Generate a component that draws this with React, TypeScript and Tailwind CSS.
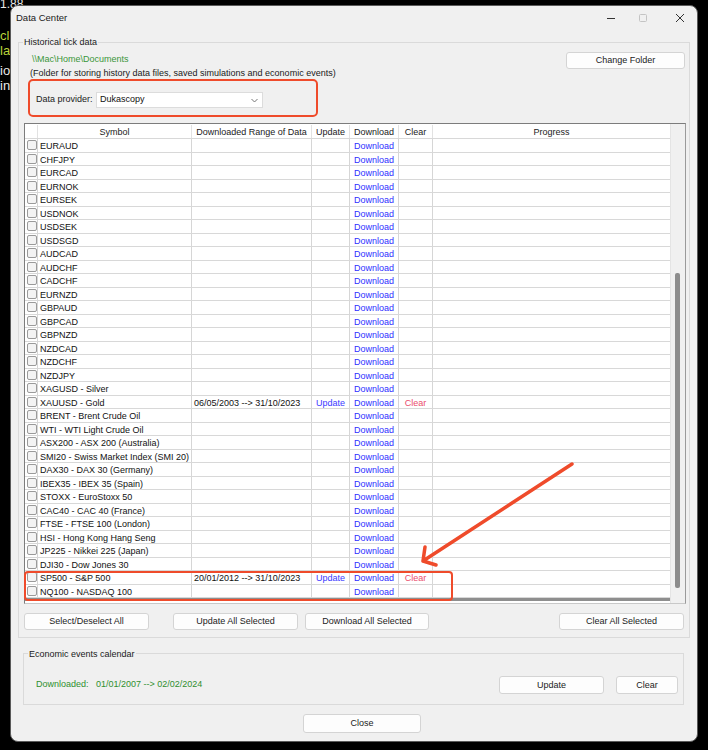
type Row = { symbol: string; range?: string };

const ROWS: Row[] = [
  { symbol: "EURAUD" },
  { symbol: "CHFJPY" },
  { symbol: "EURCAD" },
  { symbol: "EURNOK" },
  { symbol: "EURSEK" },
  { symbol: "USDNOK" },
  { symbol: "USDSEK" },
  { symbol: "USDSGD" },
  { symbol: "AUDCAD" },
  { symbol: "AUDCHF" },
  { symbol: "CADCHF" },
  { symbol: "EURNZD" },
  { symbol: "GBPAUD" },
  { symbol: "GBPCAD" },
  { symbol: "GBPNZD" },
  { symbol: "NZDCAD" },
  { symbol: "NZDCHF" },
  { symbol: "NZDJPY" },
  { symbol: "XAGUSD - Silver" },
  { symbol: "XAUUSD - Gold", range: "06/05/2003 --> 31/10/2023" },
  { symbol: "BRENT - Brent Crude Oil" },
  { symbol: "WTI - WTI Light Crude Oil" },
  { symbol: "ASX200 - ASX 200 (Australia)" },
  { symbol: "SMI20 - Swiss Market Index (SMI 20)" },
  { symbol: "DAX30 - DAX 30 (Germany)" },
  { symbol: "IBEX35 - IBEX 35 (Spain)" },
  { symbol: "STOXX - EuroStoxx 50" },
  { symbol: "CAC40 - CAC 40 (France)" },
  { symbol: "FTSE - FTSE 100 (London)" },
  { symbol: "HSI - Hong Kong Hang Seng" },
  { symbol: "JP225 - Nikkei 225 (Japan)" },
  { symbol: "DJI30 - Dow Jones 30" },
  { symbol: "SP500 - S&P 500", range: "20/01/2012 --> 31/10/2023" },
  { symbol: "NQ100 - NASDAQ 100" },
];

function Btn({ label, className }: { label: string; className: string }) {
  return (
    <button
      type="button"
      className={`block shrink-0 rounded-[3px] border border-[#d4d4d4] bg-[#fdfdfd] text-[9px] leading-none text-[#1b1b1b] ${className}`}
    >
      {label}
    </button>
  );
}

function Checkbox() {
  return (
    <div className="w-[13px] shrink-0 border-r border-[#d6d6d6] flex items-center justify-center pl-[1px]">
      <div className="w-[10px] h-[10px] rounded-[2px] border border-[#9a9a9a] bg-[#f3f3f3]" />
    </div>
  );
}

function TableRow({ row }: { row: Row }) {
  const done = !!row.range;
  return (
    <div className="flex h-[13.5px] border-b border-[#d8d8d8] leading-[13px] text-[9px] text-[#111]">
      <Checkbox />
      <div className="w-[154px] shrink-0 border-r border-[#d6d6d6] pl-[2px] pt-px whitespace-nowrap overflow-hidden">
        {row.symbol}
      </div>
      <div className="w-[120px] shrink-0 border-r border-[#d6d6d6] pl-[2px] pt-px whitespace-nowrap">
        {row.range ?? ""}
      </div>
      <div className="w-[38px] shrink-0 border-r border-[#d6d6d6] pt-px text-center text-[#3b3bff]">
        {done ? "Update" : ""}
      </div>
      <div className="w-[49px] shrink-0 border-r border-[#d6d6d6] pt-px text-center text-[#2f2fff]">
        Download
      </div>
      <div className="w-[34px] shrink-0 border-r border-[#d6d6d6] pt-px text-center text-[#ea4c6c]">
        {done ? "Clear" : ""}
      </div>
      <div className="w-[237px] shrink-0" />
    </div>
  );
}

function TitleControls() {
  return (
    <div className="flex items-center h-full">
      <svg width="10" height="10" viewBox="0 0 10 10" className="mr-[22px]">
        <line x1="1" y1="5.5" x2="9" y2="5.5" stroke="#333" strokeWidth="1" />
      </svg>
      <svg width="10" height="10" viewBox="0 0 10 10" className="mr-[27px]">
        <rect x="1.5" y="1.5" width="7" height="7" rx="1" fill="none" stroke="#c4c4c4" strokeWidth="1" />
      </svg>
      <svg width="10" height="10" viewBox="0 0 10 10" className="mr-[12px]">
        <path d="M1 1 L9 9 M9 1 L1 9" stroke="#333" strokeWidth="1" />
      </svg>
    </div>
  );
}

export default function App() {
  return (
    <div className="relative w-[708px] h-[750px] overflow-hidden bg-black pt-[5px] pl-[10px] font-['Liberation_Sans',Arial,sans-serif]">
      {/* desktop text peeking out behind the window */}
      <div className="absolute left-0 top-[-2px] text-[12px] leading-[12px] text-[#e8e8e8]">1.88</div>
      <div className="absolute left-0 top-[28px] text-[13px] leading-[15px] text-[#b8d43a]">
        <div>cl</div>
        <div>la</div>
      </div>
      <div className="absolute left-0 top-[63px] text-[13px] leading-[15px] text-[#e8e8e8]">
        <div>io</div>
        <div>in</div>
      </div>

      <div className="relative z-10 w-[688px] h-[737px] rounded-[8px] bg-[#f0f0f0] border border-[#5a5a5a]">
        <div className="flex items-center justify-between h-[24px] pl-[5px] text-[9.5px] text-[#1a1a1a]">
          <span>Data Center</span>
          <TitleControls />
        </div>

        <div className="relative mt-[12px] ml-[7px] w-[672px] h-[596px] border border-[#dadada] pt-[9px] pl-[5px] pr-[3px]">
          <span className="absolute left-[4px] top-[-7px] px-[1px] bg-[#f0f0f0] text-[9px] leading-[12px] text-[#1a1a1a]">
            Historical tick data
          </span>

          <div className="flex justify-between items-start">
            <div className="text-[9px] leading-[12px] pt-px">
              <div className="ml-[8px] text-[#3a963a]">{"\\\\Mac\\Home\\Documents"}</div>
              <div className="ml-[6px] mt-[2px] text-[#1a1a1a]">
                (Folder for storing history data files, saved simulations and economic events)
              </div>
            </div>
            <Btn label="Change Folder" className="w-[119px] h-[17px] mr-[1px]" />
          </div>

          <div className="ml-[4px] w-[290px] h-[38px] rounded-[5px] border-2 border-[#ef4b2b] pt-[11px] pl-[6px] flex items-start">
            <div className="w-[60px] h-[16px] flex items-center text-[9px] text-[#1a1a1a]">Data provider:</div>
            <div className="w-[167px] h-[16px] bg-white border border-[#dcdcdc] flex items-center justify-between pl-[3px] pr-[4px] text-[9px] text-[#111]">
              <span>Dukascopy</span>
              <svg width="7" height="5" viewBox="0 0 7 5">
                <path d="M0.5 1 L3.5 4 L6.5 1" fill="none" stroke="#777" strokeWidth="1" />
              </svg>
            </div>
          </div>

          <div className="mt-[6px] w-[662px] h-[481px] border border-t-[#7c7c7c] border-l-[#7c7c7c] border-r-[#9a9a9a] border-b-[#c8c8c8] bg-white flex">
            <div className="w-[645px] flex flex-col">
              <div className="flex h-[15px] border-b border-[#d8d8d8] pt-px leading-[14px] text-[9px] text-[#222] text-center">
                <div className="w-[13px] border-r border-[#e2e2e2]" />
                <div className="w-[154px] border-r border-[#e2e2e2]">Symbol</div>
                <div className="w-[120px] border-r border-[#e2e2e2]">Downloaded Range of Data</div>
                <div className="w-[38px] border-r border-[#e2e2e2]">Update</div>
                <div className="w-[49px] border-r border-[#e2e2e2]">Download</div>
                <div className="w-[34px] border-r border-[#e2e2e2]">Clear</div>
                <div className="w-[237px]">Progress</div>
              </div>
              {ROWS.map((r) => (
                <TableRow key={r.symbol} row={r} />
              ))}
              <div className="h-[3px] bg-[#8e8e8e]" />
            </div>
            <div className="w-[15px] bg-[#f0f0f0] border-l border-[#e4e4e4] pt-[149px] pl-[4px]">
              <div className="w-[5px] h-[315px] rounded-[2px] bg-[#8c8c8c]" />
            </div>
          </div>

          <div className="mt-[9px] flex">
            <Btn label="Select/Deselect All" className="w-[125px] h-[17px]" />
            <Btn label="Update All Selected" className="w-[125px] h-[17px] ml-[24px]" />
            <Btn label="Download All Selected" className="w-[124px] h-[17px] ml-[7px]" />
            <Btn label="Clear All Selected" className="w-[125px] h-[17px] ml-auto mr-[2px]" />
          </div>
        </div>

        <div className="relative mt-[15px] ml-[12px] w-[661px] h-[52px] border border-[#dadada] pt-[12px] pl-[12px] pr-[5px] flex items-center">
          <span className="absolute left-[4px] top-[-6px] px-[1px] bg-[#f0f0f0] text-[9px] leading-[12px] text-[#1a1a1a]">
            Economic events calendar
          </span>
          <span className="text-[9px] text-[#2f8f2f] whitespace-pre">Downloaded:   01/01/2007 --&gt; 02/02/2024</span>
          <Btn label="Update" className="w-[105px] h-[18px] ml-auto" />
          <Btn label="Clear" className="w-[62px] h-[18px] ml-[12px]" />
        </div>

        <div className="mt-[9px] ml-[292px] flex">
          <Btn label="Close" className="w-[118px] h-[19px]" />
        </div>
      </div>

      {/* red annotation overlay */}
      <div className="absolute left-[24px] top-[571px] w-[429px] h-[30px] z-20 rounded-[4px] border-2 border-[#ef4b2b]" />
      <svg className="absolute left-0 top-0 z-20 pointer-events-none" width="708" height="750" viewBox="0 0 708 750">
        <path
          d="M572 464 L423 561 M423 561 L425 547 M423 561 L436 565"
          fill="none"
          stroke="#ef4b2b"
          strokeWidth="3.5"
          strokeLinecap="round"
          strokeLinejoin="round"
        />
      </svg>
    </div>
  );
}
